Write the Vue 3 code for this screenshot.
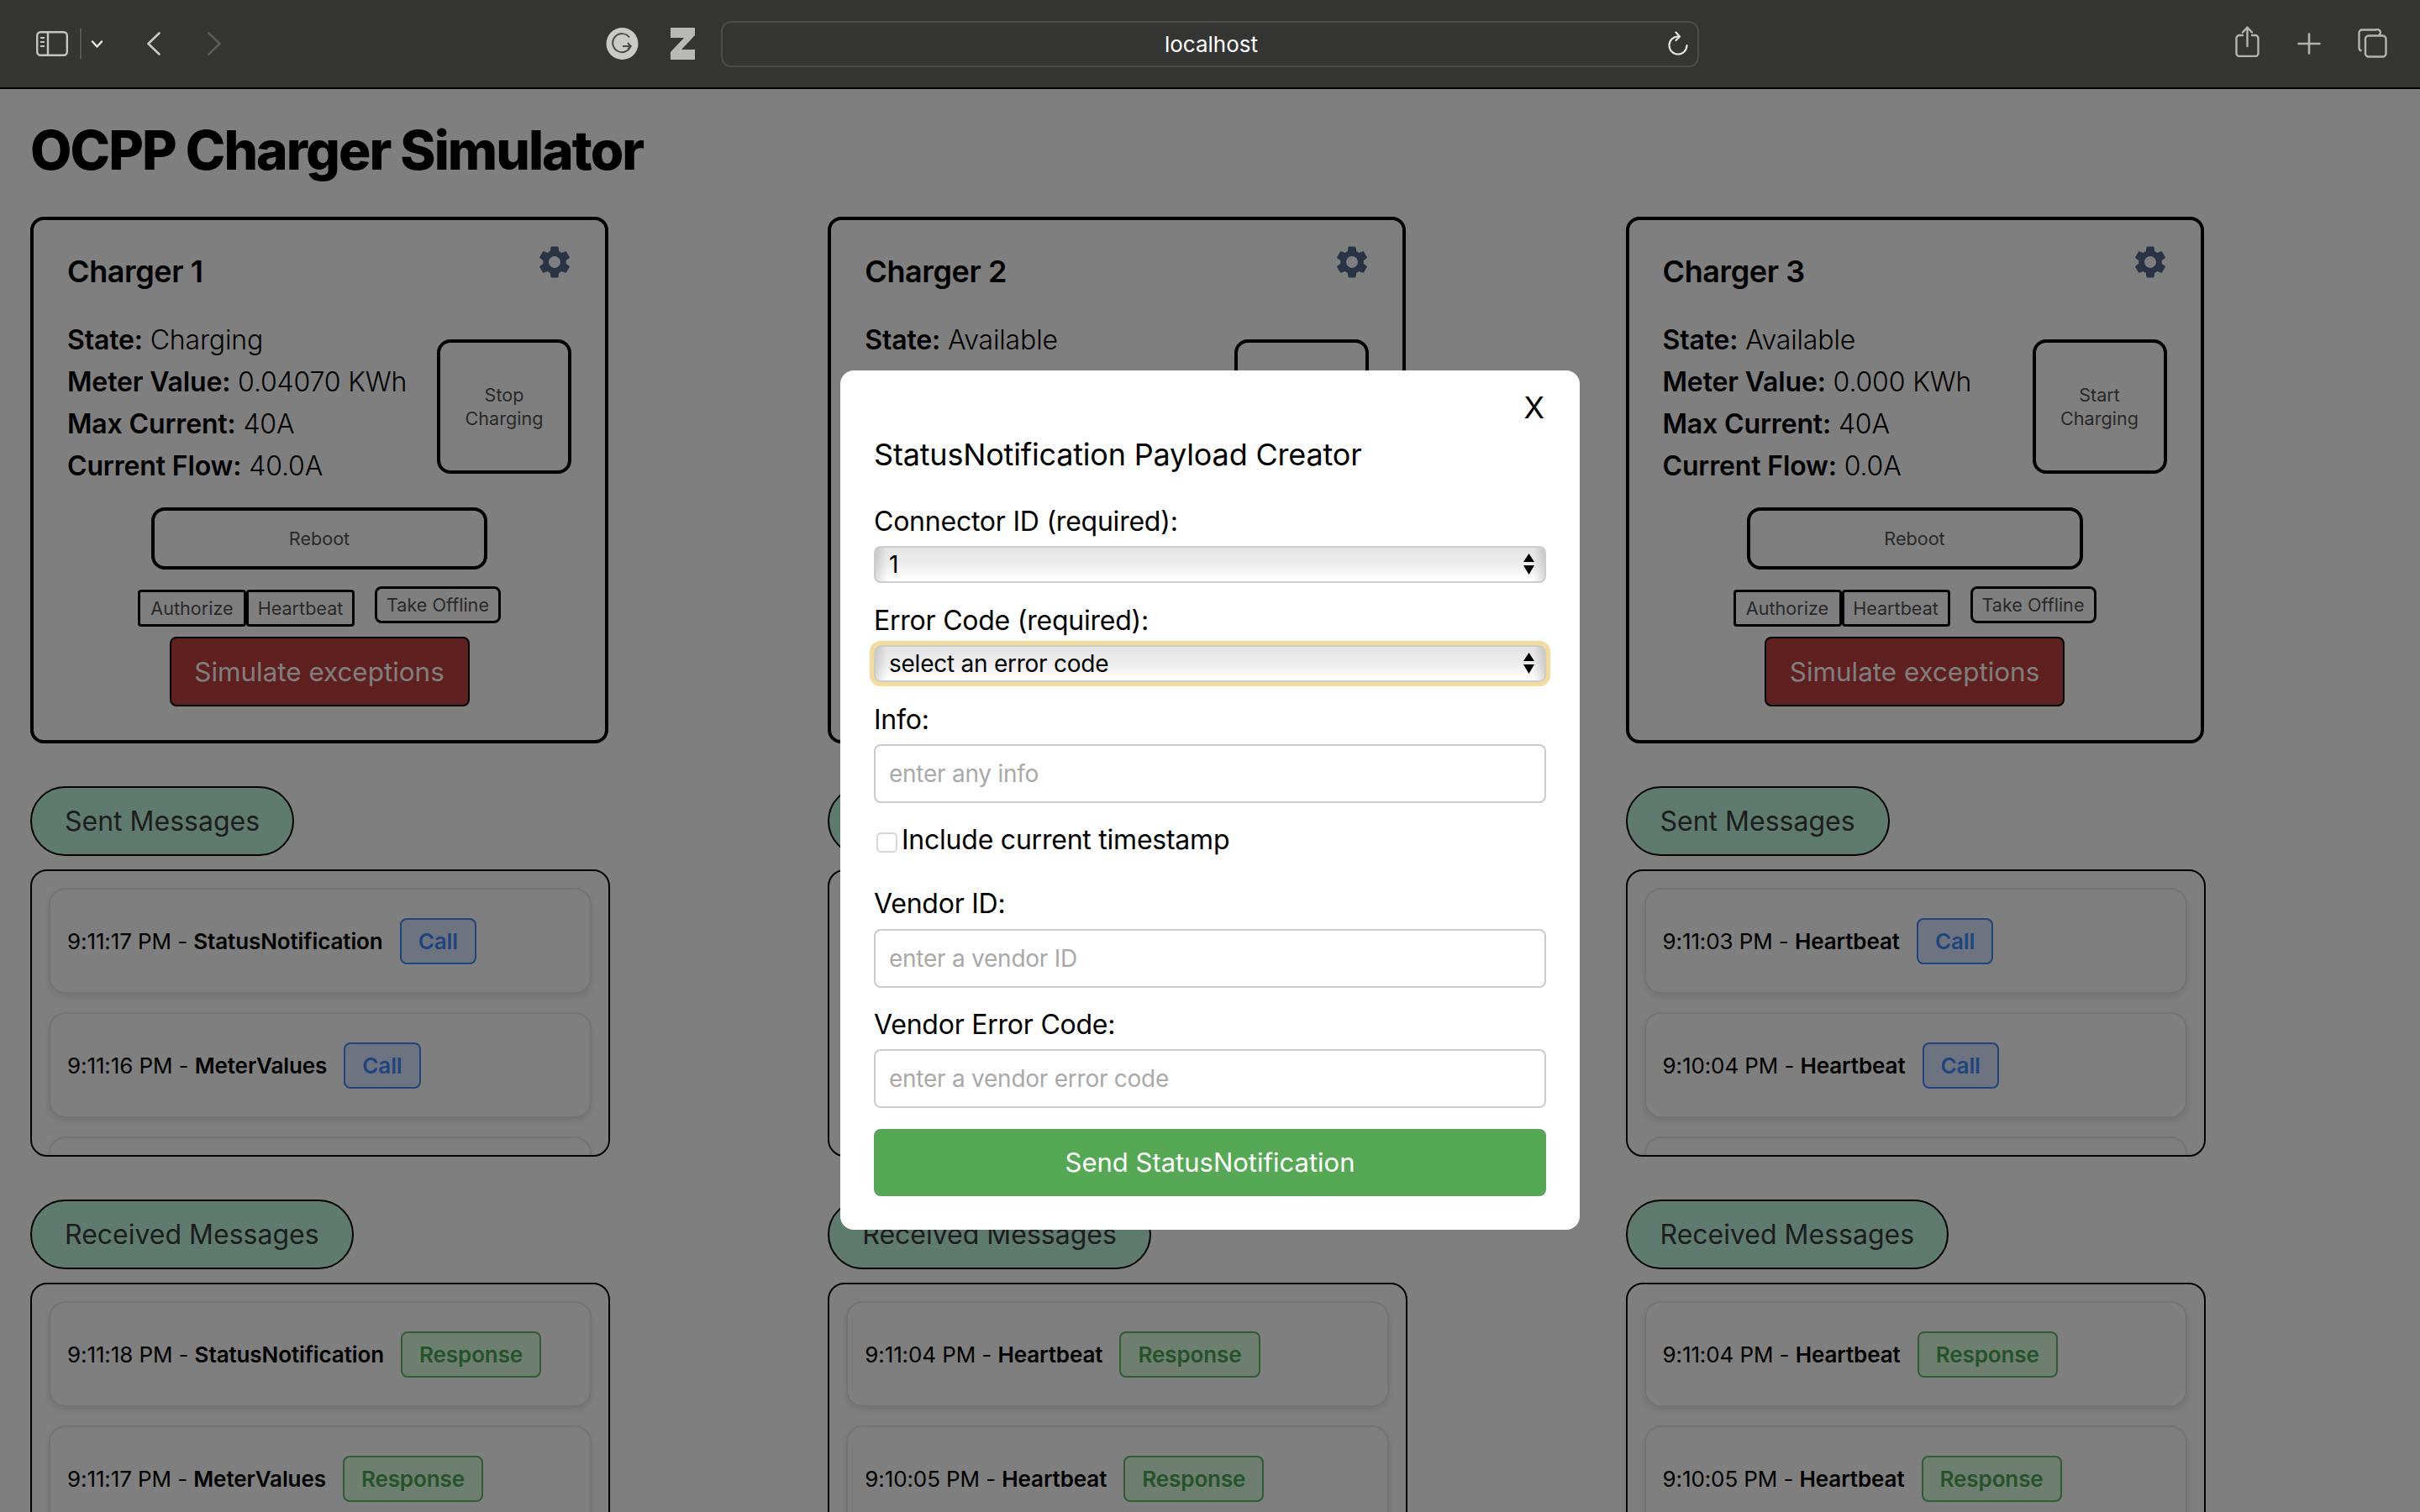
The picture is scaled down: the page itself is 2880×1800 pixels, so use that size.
<script setup>
import { ref } from 'vue'

const gearPath = 'M19.14 12.94c.04-.3.06-.61.06-.94 0-.32-.02-.64-.07-.94l2.03-1.58c.18-.14.23-.41.12-.61l-1.92-3.32c-.12-.22-.37-.29-.59-.22l-2.39.96c-.5-.38-1.03-.7-1.62-.94l-.36-2.54c-.04-.24-.24-.41-.48-.41h-3.84c-.24 0-.43.17-.47.41l-.36 2.54c-.59.24-1.13.57-1.62.94l-2.39-.96c-.22-.08-.47 0-.59.22L2.74 8.87c-.12.21-.08.47.12.61l2.03 1.58c-.05.3-.09.63-.09.94s.02.64.07.94l-2.03 1.58c-.18.14-.23.41-.12.61l1.92 3.32c.12.22.37.29.59.22l2.39-.96c.5.38 1.03.7 1.62.94l.36 2.54c.05.24.24.41.48.41h3.84c.24 0 .44-.17.47-.41l.36-2.54c.59-.24 1.13-.56 1.62-.94l2.39.96c.22.08.47 0 .59-.22l1.92-3.32c.12-.22.07-.47-.12-.61l-2.01-1.58zM12 15.6c-1.98 0-3.6-1.62-3.6-3.6s1.62-3.6 3.6-3.6 3.6 1.62 3.6 3.6-1.62 3.6-3.6 3.6z'

const chargers = ref([
  {
    name: 'Charger 1', state: 'Charging', meter: '0.04070 KWh', max: '40A', flow: '40.0A', action: 'Stop Charging',
    sent: [['9:11:17 PM', 'StatusNotification'], ['9:11:16 PM', 'MeterValues'], ['9:11:16 PM', 'MeterValues']],
    received: [['9:11:18 PM', 'StatusNotification'], ['9:11:17 PM', 'MeterValues']]
  },
  {
    name: 'Charger 2', state: 'Available', meter: '0.000 KWh', max: '40A', flow: '0.0A', action: 'Start Charging',
    sent: [['9:11:03 PM', 'Heartbeat'], ['9:10:04 PM', 'Heartbeat'], ['9:09:04 PM', 'Heartbeat']],
    received: [['9:11:04 PM', 'Heartbeat'], ['9:10:05 PM', 'Heartbeat']]
  },
  {
    name: 'Charger 3', state: 'Available', meter: '0.000 KWh', max: '40A', flow: '0.0A', action: 'Start Charging',
    sent: [['9:11:03 PM', 'Heartbeat'], ['9:10:04 PM', 'Heartbeat'], ['9:09:04 PM', 'Heartbeat']],
    received: [['9:11:04 PM', 'Heartbeat'], ['9:10:05 PM', 'Heartbeat']]
  }
])
const connector = ref('1')
const errorCode = ref('')
const info = ref('')
const timestamp = ref(false)
const vendorId = ref('')
const vendorError = ref('')
</script>

<template>
  <div class="window">
    <header class="toolbar">
      <svg class="i-sidebar" width="38" height="30" viewBox="0 0 38 30" fill="none" stroke="#c4c4c2" stroke-width="2.4">
        <rect x="1.2" y="1.2" width="35.6" height="27.6" rx="4" />
        <path d="M14 1.2v27.6" />
        <path d="M5 8h5M5 13h5M5 18h5" stroke-width="2" />
      </svg>
      <div class="i-divider"></div>
      <svg class="i-chevron" width="15" height="9" viewBox="0 0 15 9" fill="none" stroke="#e8e8e6" stroke-width="2.4" stroke-linecap="round" stroke-linejoin="round">
        <path d="M2 1.5l5.5 6 5.5-6" />
      </svg>
      <svg class="i-back" width="16" height="28" viewBox="0 0 16 28" fill="none" stroke="#c8c8c6" stroke-width="2.6" stroke-linecap="round" stroke-linejoin="round">
        <path d="M14.5 1.5L1.5 14l13 12.5" />
      </svg>
      <svg class="i-forward" width="16" height="28" viewBox="0 0 16 28" fill="none" stroke="#5c5c5a" stroke-width="2.6" stroke-linecap="round" stroke-linejoin="round">
        <path d="M1.5 1.5L14.5 14l-13 12.5" />
      </svg>
      <svg class="i-g" width="39" height="38" viewBox="0 0 39 38">
        <circle cx="19.5" cy="19" r="19" fill="#c9c9c8" />
        <path d="M28 11.5A11 11 0 1 0 29.5 22H20" fill="none" stroke="#4a4a48" stroke-width="2" />
        <path d="M26 18l3.5 4-3.5 4" fill="none" stroke="#4a4a48" stroke-width="2" />
      </svg>
      <svg class="i-z" width="29" height="38" viewBox="0 0 29 38">
        <path d="M0 0h29v9L13 26h16v12H0v-9l16-17H0z" fill="#b8b8b6" />
      </svg>
      <div class="urlbar">
        <span>localhost</span>
        <svg class="i-reload" width="26" height="30" viewBox="0 0 26 30" fill="none" stroke="#e4e4e2" stroke-width="2.2" stroke-linecap="round" stroke-linejoin="round">
          <path d="M13 6.5a10.5 10.5 0 1 0 10.5 10.5" />
          <path d="M10.5 1.5L15 6.5l-4.5 4.5" />
        </svg>
      </div>
      <svg class="i-share" width="29" height="37" viewBox="0 0 29 37" fill="none" stroke="#b4b4b2" stroke-width="2.4" stroke-linecap="round" stroke-linejoin="round">
        <path d="M9 11H5a3.5 3.5 0 0 0-3.5 3.5v18A3.5 3.5 0 0 0 5 36h19a3.5 3.5 0 0 0 3.5-3.5v-18A3.5 3.5 0 0 0 24 11h-4" />
        <path d="M14.5 24V2M9 7.5l5.5-6 5.5 6" />
      </svg>
      <svg class="i-plus" width="28" height="26" viewBox="0 0 28 26" fill="none" stroke="#b4b4b2" stroke-width="2.6" stroke-linecap="round">
        <path d="M14 1.5v23M1.5 13h25" />
      </svg>
      <svg class="i-tabs" width="35" height="35" viewBox="0 0 35 35" fill="none" stroke="#b4b4b2" stroke-width="2.4" stroke-linejoin="round">
        <path d="M4.5 26.5A3.5 3.5 0 0 1 1.5 23V5A3.5 3.5 0 0 1 5 1.5h16A3.5 3.5 0 0 1 25 8" />
        <rect x="9" y="8.5" width="24.5" height="25" rx="4" />
      </svg>
    </header>

    <main class="page">
      <h1>OCPP Charger Simulator</h1>
      <div class="columns">
        <section v-for="c in chargers" :key="c.name" class="column">
          <div class="card">
            <div class="card-head">
              <h2>{{ c.name }}</h2>
              <svg class="gear" width="46" height="46" viewBox="0 0 24 24"><path :d="gearPath" fill="#56698f" /></svg>
            </div>
            <div class="card-body">
              <div class="stats">
                <p><b>State:</b> {{ c.state }}</p>
                <p><b>Meter Value:</b> {{ c.meter }}</p>
                <p><b>Max Current:</b> {{ c.max }}</p>
                <p><b>Current Flow:</b> {{ c.flow }}</p>
              </div>
              <button class="btn-action">{{ c.action }}</button>
            </div>
            <button class="btn-reboot">Reboot</button>
            <div class="small-row">
              <div class="small-group">
                <button class="btn-small">Authorize</button>
                <button class="btn-small">Heartbeat</button>
              </div>
              <button class="btn-offline">Take Offline</button>
            </div>
            <button class="btn-exceptions">Simulate exceptions</button>
          </div>

          <div class="pill">Sent Messages</div>
          <div class="msg-box sent-box">
            <div v-for="(m, i) in c.sent" :key="i" class="msg">
              <span>{{ m[0] }} - <b>{{ m[1] }}</b></span>
              <span class="tag tag-call">Call</span>
            </div>
          </div>

          <div class="pill">Received Messages</div>
          <div class="msg-box">
            <div v-for="(m, i) in c.received" :key="i" class="msg">
              <span>{{ m[0] }} - <b>{{ m[1] }}</b></span>
              <span class="tag tag-response">Response</span>
            </div>
          </div>
        </section>
      </div>

      <div class="overlay">
        <div class="modal">
          <div class="close-row"><button class="close">X</button></div>
          <h3>StatusNotification Payload Creator</h3>
          <form @submit.prevent>
            <label class="first">Connector ID (required):</label>
            <div class="select-wrap">
              <select v-model="connector"><option value="1">1</option><option value="2">2</option></select>
              <svg width="13" height="25" viewBox="0 0 13 25"><path d="M6.5 0L13 10H0zM0 14h13L6.5 25z" /></svg>
            </div>
            <label>Error Code (required):</label>
            <div class="select-wrap focused">
              <select v-model="errorCode"><option value="">select an error code</option><option value="NoError">NoError</option></select>
              <svg width="13" height="25" viewBox="0 0 13 25"><path d="M6.5 0L13 10H0zM0 14h13L6.5 25z" /></svg>
            </div>
            <label class="info">Info:</label>
            <input v-model="info" type="text" placeholder="enter any info">
            <label class="check"><input v-model="timestamp" type="checkbox">Include current timestamp</label>
            <label class="after-check">Vendor ID:</label>
            <input v-model="vendorId" type="text" placeholder="enter a vendor ID">
            <label>Vendor Error Code:</label>
            <input v-model="vendorError" type="text" placeholder="enter a vendor error code">
            <button class="send" type="submit">Send StatusNotification</button>
          </form>
        </div>
      </div>
    </main>
  </div>
</template>

<style scoped>
.window {
  height: 1800px;
  overflow: hidden;
  display: flex;
  flex-direction: column;
  font-family: Inter, "Liberation Sans", sans-serif;
  color: #000;
  background: #fff;
}
button, input, select {
  font-family: inherit;
}

/* browser chrome */
.toolbar {
  flex: none;
  height: 104px;
  border-bottom: 2px solid #000;
  background: #353533;
  display: flex;
  align-items: center;
}
.toolbar svg { flex: none; }
.i-sidebar { margin-left: 43px; }
.i-divider { width: 2px; height: 36px; margin-left: 14px; background: #555553; }
.i-chevron { margin-left: 11px; }
.i-back { margin-left: 52px; }
.i-forward { margin-left: 56px; }
.i-g { margin-left: 458px; }
.i-z { margin-left: 38px; }
.urlbar {
  position: relative;
  width: 1164px;
  height: 55px;
  margin-left: 31px;
  padding-left: 3px;
  box-sizing: border-box;
  border: 2px solid #4c4c4a;
  border-radius: 12px;
  display: flex;
  align-items: center;
  justify-content: center;
  color: #fff;
  font-size: 26px;
}
.i-reload { position: absolute; right: 10px; top: 10px; }
.i-share { margin-left: 638px; margin-top: -5px; }
.i-plus { margin-left: 45px; }
.i-tabs { margin-left: 44px; margin-top: -2px; }

/* page */
.page {
  position: relative;
  flex: 1;
  min-height: 0;
  padding: 0 0 0 36px;
  overflow: hidden;
}
h1 {
  margin: 0;
  padding-top: 34px;
  height: 120px;
  box-sizing: border-box;
  font-size: 64px;
  line-height: 78px;
  font-weight: 800;
  letter-spacing: -1.95px;
}
.columns {
  margin-top: 32px;
  display: grid;
  grid-template-columns: repeat(3, 949.25px);
}
.column {
  width: 690px;
  display: flex;
  flex-direction: column;
  align-items: flex-start;
}
.card {
  width: 688px;
  box-sizing: border-box;
  padding: 30px 40px 40px;
  border: 4px solid #000;
  border-radius: 16px;
  display: flex;
  flex-direction: column;
  align-items: center;
}
.card-head {
  align-self: stretch;
  height: 88px;
  display: flex;
  justify-content: space-between;
  align-items: flex-start;
}
.card-head h2 {
  margin: 6px 0 0;
  font-size: 36px;
  line-height: 50px;
  font-weight: 600;
  letter-spacing: -0.4px;
}
.gear { margin: -3px -3px 0 0; }
.card-body {
  align-self: stretch;
  display: flex;
  justify-content: space-between;
  align-items: flex-start;
}
.stats p {
  margin: 0;
  font-size: 32px;
  line-height: 50px;
  font-weight: 300;
  letter-spacing: -0.15px;
  white-space: nowrap;
}
.stats b { font-weight: 600; }
.btn-action, .btn-reboot, .btn-small, .btn-offline {
  background: #fff;
  color: #555;
  border: 4px solid #000;
  font-size: 21.6px;
  padding: 0;
}
.btn-action {
  width: 160px;
  height: 160px;
  margin-top: 24px;
  padding: 0 20px;
  line-height: 28px;
  border-radius: 16px;
}
.btn-reboot {
  width: 400px;
  height: 74px;
  margin-top: 24px;
  border-radius: 16px;
}
.small-row {
  margin-top: 20px;
  display: flex;
  align-items: flex-start;
  gap: 24px;
}
.small-group {
  margin-top: 4px;
  display: flex;
}
.btn-small {
  height: 44px;
  width: 129px;
  border-width: 3px;
  border-radius: 4px;
}
.btn-offline {
  height: 44px;
  width: 150px;
  border-width: 3px;
  border-radius: 8px;
}
.btn-exceptions {
  margin-top: 12px;
  width: 357px;
  height: 83px;
  background: #c24040;
  color: #fff;
  border: 2px solid #000;
  border-radius: 8px;
  font-size: 31.4px;
  font-weight: 400;
}
.pill {
  margin-top: 51px;
  box-sizing: border-box;
  height: 83px;
  padding: 0 39px;
  border: 2px solid #000;
  border-radius: 42px;
  background: #bff5dc;
  color: #3c3c3c;
  font-size: 32px;
  line-height: 80px;
  white-space: nowrap;
}
.msg-box {
  margin-top: 16px;
  width: 690px;
  box-sizing: border-box;
  padding: 20px;
  border: 2px solid #000;
  border-radius: 20px;
  display: flex;
  flex-direction: column;
  gap: 22px;
  overflow: hidden;
  flex: none;
}
.sent-box { height: 342px; }
.msg {
  flex: none;
  height: 126px;
  box-sizing: border-box;
  padding: 0 20px;
  border: 2px solid #e5e7eb;
  border-radius: 20px;
  box-shadow: 0 4px 8px rgba(0, 0, 0, 0.1);
  display: flex;
  align-items: center;
  gap: 20px;
  font-size: 26px;
  letter-spacing: -0.1px;
  white-space: nowrap;
}
.msg b { font-weight: 600; }
.tag {
  box-sizing: border-box;
  height: 55px;
  padding: 0 20px;
  border: 2px solid;
  border-radius: 8px;
  font-weight: 600;
  line-height: 51px;
}
.tag-call {
  color: #3c8aff;
  border-color: #3c8aff;
  background: #dde9ff;
}
.tag-response {
  color: #4aa855;
  border-color: #62b86b;
  background: #dcfce0;
}

/* modal */
.overlay {
  position: absolute;
  inset: 0;
  background: rgba(0, 0, 0, 0.5);
  display: flex;
  align-items: center;
  justify-content: center;
}
.modal {
  width: 880px;
  box-sizing: border-box;
  margin-top: -2px;
  padding: 22px 40px 40px;
  border-radius: 16px;
  background: #fff;
}
.close-row {
  display: flex;
  justify-content: flex-end;
  height: 44px;
}
.close {
  padding: 0;
  margin-right: 2px;
  border: none;
  background: none;
  color: #000;
  font-size: 36px;
  line-height: 44px;
}
h3 {
  margin: 12px 0 0;
  font-size: 36px;
  line-height: 44px;
  font-weight: 400;
  letter-spacing: -0.18px;
}
form { display: flex; flex-direction: column; }
label {
  display: block;
  margin: 25.5px 0 10px;
  font-size: 32px;
  line-height: 38px;
  letter-spacing: -0.23px;
}
label.first { margin-top: 39.5px; }
label.info { margin-top: 26px; }
label.after-check { margin-top: 37.5px; margin-bottom: 11px; }
label.check {
  margin-bottom: 0;
  display: flex;
  align-items: center;
}
label.check input {
  appearance: none;
  flex: none;
  width: 25px;
  height: 24px;
  margin: 5px 5px 0 3px;
  padding: 0;
  border: 2px solid #d8d8d8;
  border-radius: 5px;
  background: #fff;
}
input[type="text"] {
  box-sizing: border-box;
  width: 100%;
  height: 70px;
  padding: 0 16px;
  border: 2px solid #ccc;
  border-radius: 8px;
  font-size: 28px;
  letter-spacing: -0.25px;
  outline: none;
}
input[type="text"]::placeholder { color: #a9a9a9; }
.select-wrap {
  position: relative;
  height: 44px;
}
.select-wrap select {
  appearance: none;
  display: block;
  box-sizing: border-box;
  width: 100%;
  height: 100%;
  padding: 0 16px;
  border: 2px solid #ccc;
  border-radius: 8px;
  background:
    linear-gradient(90deg, rgba(0, 0, 0, 0.13), transparent 14px, transparent calc(100% - 14px), rgba(0, 0, 0, 0.13)),
    linear-gradient(#e4e4e4, #ededed 50%, #fff);
  color: #000;
  font-size: 28px;
  letter-spacing: -0.25px;
  outline: none;
}
.select-wrap svg {
  position: absolute;
  right: 14px;
  top: 9px;
}
.select-wrap.focused select {
  box-shadow: 0 0 0 5px #f5db96;
}
.send {
  margin-top: 24.5px;
  height: 80px;
  border: none;
  border-radius: 8px;
  background: #55a854;
  color: #fff;
  font-size: 31px;
}
</style>

<style>
html, body {
  margin: 0;
  overflow: hidden;
}
</style>
